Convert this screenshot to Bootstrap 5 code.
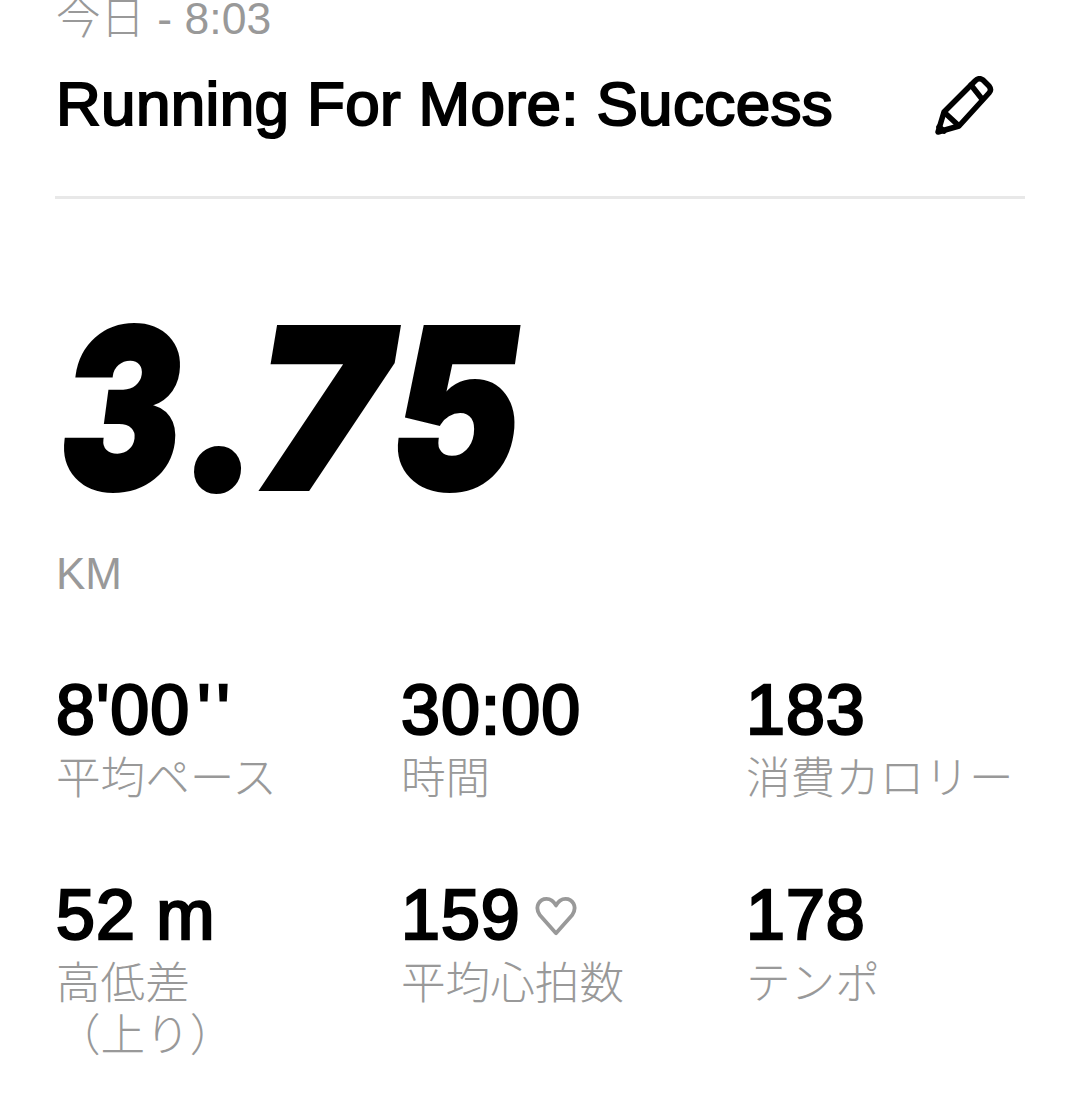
<!DOCTYPE html>
<html lang="ja">
<head>
  <meta charset="UTF-8">
  <title>Running For More</title>
  <link href="https://cdn.jsdelivr.net/npm/bootstrap@5.3.0/dist/css/bootstrap.min.css" rel="stylesheet">
  <style>
    body {
      background: #fff;
      color: #000;
      font-family: "Liberation Sans", "Noto Sans CJK JP", sans-serif;
      overflow: hidden;
      height: 1104px;
    }
    .run-page {
      margin-top: -15px;
      padding: 0 55px 0 55px;
    }
    .run-when {
      color: #999;
      font-size: 44.5px;
      line-height: 68px;
      padding-left: 1px;
      padding-bottom: 16px;
      font-weight: 300;
    }
    .run-head {
      height: 130px;
      padding-left: 1px;
      border-bottom: 3px solid #e8e8e8;
    }
    .run-title {
      font-size: 62px;
      line-height: 70px;
      font-weight: 400;
      letter-spacing: .35px;
      -webkit-text-stroke: 2px #000;
      margin: 0;
    }
    .run-edit {
      width: 60px;
      height: 60px;
      margin-right: 31px;
      margin-top: 7px;
    }
    .run-distance {
      margin-top: 115px;
      padding-left: 6px;
      font-family: "Inter", "Liberation Sans", sans-serif;
      font-size: 222px;
      line-height: 190px;
      font-weight: 900;
      font-style: italic;
      -webkit-text-stroke: 4px #000;
    }
    .run-digit {
      display: block;
      transform-origin: left center;
    }
    .run-digit-3 { width: 123px; transform: scaleX(.81); }
    .run-digit-dot { width: 72px; transform: scaleX(.97); }
    .run-digit-7 { width: 136px; transform: scaleX(1); }
    .run-digit-5 { width: 130px; transform: scaleX(.86); }
    .run-unit {
      color: #999;
      font-size: 44px;
      line-height: 52px;
      margin-top: 44px;
      padding-left: 1px;
    }
    .run-stats {
      display: grid;
      grid-template-columns: 345px 345px 1fr;
      row-gap: 68px;
      margin-top: 68px;
      padding-left: 1px;
    }
    .run-value {
      font-size: 70px;
      line-height: 85px;
      font-weight: 400;
      letter-spacing: 1px;
      -webkit-text-stroke: 2.5px #000;
    }
    .run-ticks {
      letter-spacing: 6px;
      margin-left: 7px;
    }
    .run-label {
      color: #999;
      font-size: 44.6px;
      line-height: 52px;
      font-weight: 300;
      white-space: nowrap;
    }
    .run-heart {
      width: 42px;
      height: 42px;
      margin-left: 14px;
    }
  </style>
</head>
<body>
  <div class="run-page">
    <div class="run-when">今日 - 8:03</div>
    <div class="run-head d-flex justify-content-between align-items-start">
      <h1 class="run-title">Running For More: Success</h1>
      <svg class="run-edit" viewBox="0 0 60 60" fill="none" stroke="#000" stroke-width="5.500" stroke-linejoin="round" stroke-linecap="round">
        <path d="M4 56 L10 36 L41 5 Q45 1 49 4 L55 10 Q58 14 55 17 L25 50 Z"/>
        <path d="M37 9 L48 23"/>
        <path d="M11 37 L24 49"/>
        <path d="M5 51 L10 55"/>
      </svg>
    </div>
    <div class="run-distance d-flex">
      <span class="run-digit run-digit-3">3</span><span class="run-digit run-digit-dot">.</span><span class="run-digit run-digit-7">7</span><span class="run-digit run-digit-5">5</span>
    </div>
    <div class="run-unit">KM</div>
    <div class="run-stats">
      <div>
        <div class="run-value">8'00<span class="run-ticks">''</span></div>
        <div class="run-label">平均ペース</div>
      </div>
      <div>
        <div class="run-value">30:00</div>
        <div class="run-label">時間</div>
      </div>
      <div>
        <div class="run-value">183</div>
        <div class="run-label">消費カロリー</div>
      </div>
      <div>
        <div class="run-value">52 m</div>
        <div class="run-label">高低差<br>（上り）</div>
      </div>
      <div>
        <div class="run-value d-flex align-items-center">159
          <svg class="run-heart" viewBox="0 0 44 44" fill="none" stroke="#999" stroke-width="4" stroke-linejoin="round">
            <path d="M22 40 L5 21 C-1 12 5 4 12 4 C17 4 20 7 22 11 C24 7 27 4 32 4 C39 4 45 12 39 21 Z"/>
          </svg>
        </div>
        <div class="run-label">平均心拍数</div>
      </div>
      <div>
        <div class="run-value">178</div>
        <div class="run-label">テンポ</div>
      </div>
    </div>
  </div>
  <script src="https://cdn.jsdelivr.net/npm/bootstrap@5.3.0/dist/js/bootstrap.bundle.min.js"></script>
</body>
</html>
